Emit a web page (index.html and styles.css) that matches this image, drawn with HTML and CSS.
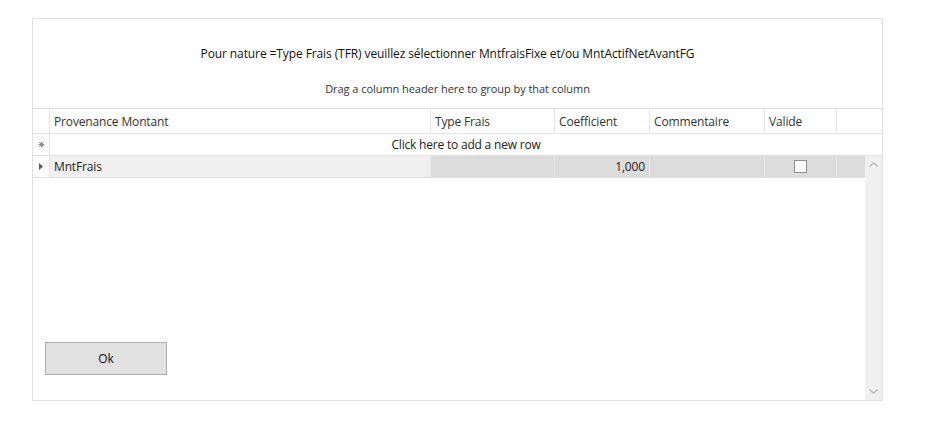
FILE: index.html
```html
<!DOCTYPE html>
<html>
<head>
<meta charset="utf-8">
<link rel="stylesheet" href="styles.css">
</head>
<body>
<div class="panel">
  <div class="top">
    <div class="title">Pour nature =Type Frais (TFR) veuillez sélectionner MntfraisFixe et/ou MntActifNetAvantFG</div>
    <div class="group">Drag a column header here to group by that column</div>
  </div>
  <div class="grid">
    <div class="row head">
      <div class="c c0"></div>
      <div class="c c1">Provenance Montant</div>
      <div class="c c2">Type Frais</div>
      <div class="c c3">Coefficient</div>
      <div class="c c4">Commentaire</div>
      <div class="c c5">Valide</div>
      <div class="c c6"></div>
    </div>
    <div class="row newrow">
      <div class="c c0">
        <svg width="7" height="7" viewBox="0 0 7 7"><path d="M3.5 0.5V6.5M0.5 3.5H6.5M1.3 1.3L5.7 5.7M5.7 1.3L1.3 5.7" stroke="#8a8a8a" stroke-width="1"/></svg>
      </div>
      <div class="addtext">Click here to add a new row</div>
    </div>
    <div class="body">
      <div class="rows">
        <div class="row data">
          <div class="c c0">
            <svg width="4" height="7" viewBox="0 0 4 7"><path d="M0 0L4 3.5L0 7Z" fill="#555"/></svg>
          </div>
          <div class="c c1 light">MntFrais</div>
          <div class="c c2"></div>
          <div class="c c3 num">1,000</div>
          <div class="c c4"></div>
          <div class="c c5 chk"><span class="box"></span></div>
          <div class="c c6b"></div>
        </div>
        <div class="footer">
          <button class="ok">Ok</button>
        </div>
      </div>
      <div class="scroll">
        <svg class="arr" width="9" height="5" viewBox="0 0 9 5"><path d="M0.5 4.5L4.5 0.8L8.5 4.5" fill="none" stroke="#b4b4b4" stroke-width="1.2"/></svg>
        <svg class="arr" width="9" height="5" viewBox="0 0 9 5"><path d="M0.5 0.5L4.5 4.2L8.5 0.5" fill="none" stroke="#b4b4b4" stroke-width="1.2"/></svg>
      </div>
    </div>
  </div>
</div>
</body>
</html>
```
FILE: styles.css
```css
* { box-sizing: border-box; }
html, body { margin: 0; padding: 0; background: #fff; }
body {
  font-family: "Open Sans", "Noto Sans", sans-serif;
  color: #1e1e1e;
  padding: 18px 0 0 32px;
}
.panel {
  width: 851px;
  height: 383px;
  border: 1px solid #e0e0e0;
  display: flex;
  flex-direction: column;
}
.top {
  height: 89px;
  display: flex;
  flex-direction: column;
  align-items: center;
}
.title {
  font-size: 12px;
  margin-top: 26px;
  letter-spacing: -0.1px;
  padding-right: 20px;
  color: #111;
}
.group {
  font-size: 11px;
  margin-top: 19px;
  letter-spacing: -0.05px;
  color: #333;
}
.grid {
  flex: 1;
  display: flex;
  flex-direction: column;
  border-top: 1px solid #dedede;
  min-height: 0;
}
.row { display: flex; }
.c {
  border-right: 1px solid #e3e3e3;
  display: flex;
  align-items: center;
  font-size: 12px;
  letter-spacing: -0.15px;
  padding-left: 4px;
  white-space: nowrap;
}
.c0 { width: 17px; justify-content: center; padding: 0; }
.c1 { width: 381px; }
.c2 { width: 124px; }
.c3 { width: 95px; }
.c4 { width: 115px; }
.c5 { width: 72px; }
.c6 { width: 45px; border-right: none; }
.c6b { width: 28px; border-right: none; }
.head { height: 25px; border-bottom: 1px solid #e3e3e3; }
.head .c { color: #333; }
.newrow { height: 22px; border-bottom: 1px solid #e0e0e0; }
.addtext {
  flex: 1;
  text-align: center;
  font-size: 12px;
  letter-spacing: -0.2px;
  color: #222;
  line-height: 21px;
}
.body { flex: 1; display: flex; min-height: 0; }
.rows { width: 832px; display: flex; flex-direction: column; }
.data { height: 22px; border-bottom: 1px solid #e0e0e0; background: #dcdcdc; }
.data .c0 { background: #fff; }
.data .c { border-right-color: #e6e6e6; color: #222; }
.data .light { background: #f0f0f0; }
.num { justify-content: flex-end; padding-right: 4px; }
.chk { justify-content: center; padding: 0; }
.box { width: 13px; height: 13px; background: #fff; border: 1px solid #8f8f8f; }
.footer { flex: 1; display: flex; align-items: flex-end; padding: 0 0 25px 12px; }
.ok {
  width: 122px;
  height: 33px;
  background: #e1e1e1;
  border: 1px solid #adadad;
  font-family: "Open Sans", "Noto Sans", sans-serif;
  font-size: 12px;
  color: #111;
  padding: 0;
}
.scroll {
  width: 17px;
  background: #f0f0f0;
  display: flex;
  flex-direction: column;
  justify-content: space-between;
  align-items: center;
  padding: 6px 0 6px;
}
```
